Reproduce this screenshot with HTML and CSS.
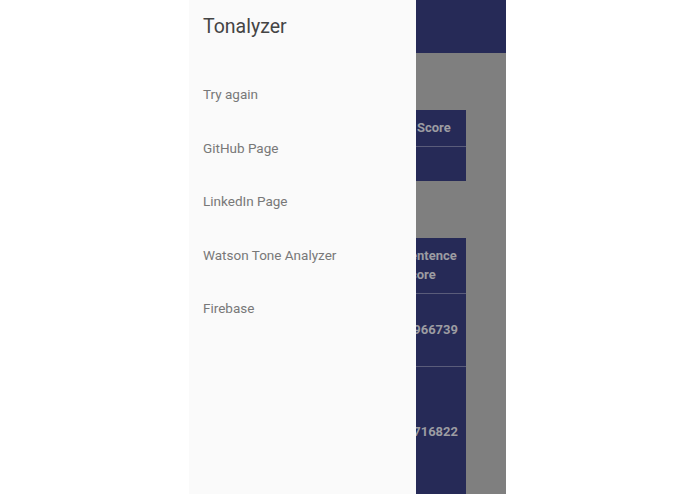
FILE: index.html
```html
<!DOCTYPE html>
<html>
<head>
<meta charset="utf-8">
<link rel="stylesheet" href="styles.css">
</head>
<body>
<div class="stage">
  <div class="phone">
    <div class="app">
      <div class="appbar"></div>
      <div class="content">
        <table class="tbl tbl1">
          <tr class="head"><td class="c1">Tone</td><td class="c2">Score</td></tr>
          <tr class="row"><td class="c1">Joy</td><td class="c2"></td></tr>
        </table>
        <table class="tbl tbl2">
          <tr class="head h2"><td class="c1">Sentence</td><td class="c2">Sentence<br>Score</td></tr>
          <tr class="row r2"><td class="c1">First sentence</td><td class="c2">0.966739</td></tr>
          <tr class="row r3"><td class="c1">Second sentence</td><td class="c2">0.716822</td></tr>
        </table>
      </div>
    </div>
    <nav class="drawer">
      <div class="title">Tonalyzer</div>
      <ul class="menu">
        <li>Try again</li>
        <li>GitHub Page</li>
        <li>LinkedIn Page</li>
        <li>Watson Tone Analyzer</li>
        <li>Firebase</li>
      </ul>
    </nav>
  </div>
</div>
</body>
</html>
```
FILE: styles.css
```css
html, body {
  margin: 0;
  padding: 0;
  background: #ffffff;
  font-family: Roboto, "Liberation Sans", sans-serif;
}
.stage {
  display: flex;
  justify-content: center;
  height: 494px;
  overflow: hidden;
}
.phone {
  position: relative;
  width: 317px;
  height: 494px;
  overflow: hidden;
  background: #7f7f7f;
}
.app {
  display: flex;
  flex-direction: column;
}
.appbar {
  height: 53px;
  background: #262a57;
}
.content {
  display: flex;
  flex-direction: column;
  align-items: flex-end;
  padding-right: 40px;
  padding-top: 57px;
}
.tbl {
  border-collapse: collapse;
  table-layout: fixed;
  background: #262a57;
  color: #9c9ca2;
  font-weight: bold;
  font-size: 13px;
}
.tbl td {
  padding: 0;
  vertical-align: middle;
  white-space: nowrap;
  overflow: hidden;
  box-sizing: border-box;
}
.tbl1 { width: 240px; }
.tbl1 .c1 { padding-left: 12px; }
.tbl1 .c2 { width: 50px; padding-left: 1px; padding-right: 14px; }
.tbl1 .head { height: 36px; }
.tbl1 .row { height: 35px; border-top: 1px solid #5a5c7a; }
.tbl2 { width: 260px; margin-top: 57px; }
.tbl2 .c1 { padding-left: 12px; }
.tbl2 .c2 { width: 72px; padding-left: 8px; padding-right: 9px; line-height: 19px; }
.tbl2 .h2 { height: 55px; }
.tbl2 .r2 { height: 73px; border-top: 1px solid #5a5c7a; }
.tbl2 .r3 { height: 130px; border-top: 1px solid #5a5c7a; }
.drawer {
  position: absolute;
  left: 0;
  top: 0;
  width: 227px;
  height: 494px;
  background: #fafafa;
  padding-left: 14px;
  box-sizing: border-box;
}
.title {
  height: 53px;
  line-height: 53px;
  font-size: 19.5px;
  color: #444444;
}
.menu {
  list-style: none;
  margin: 0;
  padding: 15px 0 0 0;
}
.menu li {
  height: 53.5px;
  line-height: 53.5px;
  font-size: 13.5px;
  color: #787878;
}
```
